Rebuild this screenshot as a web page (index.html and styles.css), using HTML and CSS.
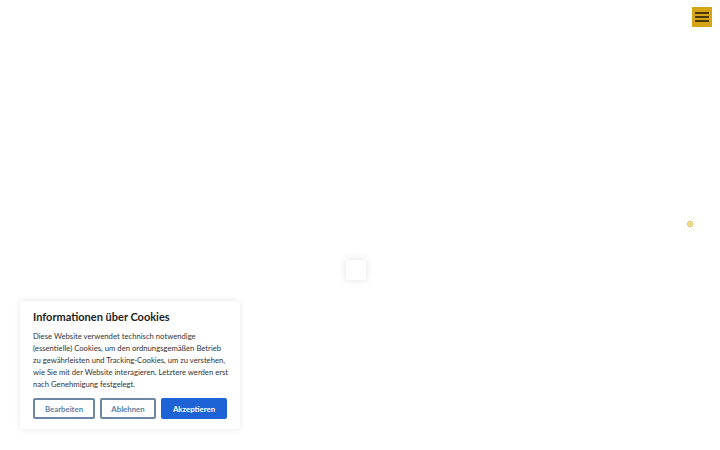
FILE: index.html
```html
<!DOCTYPE html>
<html lang="de">
<head>
<meta charset="UTF-8">
<meta name="viewport" content="width=device-width, initial-scale=1.0">
<title>Startseite</title>
<link rel="stylesheet" href="styles.css">
</head>
<body>
<div id="page">
    <button class="menu-toggle" aria-label="Menü">
        <span></span><span></span><span></span>
    </button>
    <div class="dot"></div>
    <div class="loader"></div>

    <div id="cookie-notice">
        <h3>Informationen über Cookies</h3>
        <p>Diese Website verwendet technisch notwendige (essentielle) Cookies, um den ordnungsgemäßen Betrieb zu gewährleisten und Tracking-Cookies, um zu verstehen, wie Sie mit der Website interagieren. Letztere werden erst nach Genehmigung festgelegt.</p>
        <div class="cookie-buttons">
            <button class="btn btn-outline">Bearbeiten</button>
            <button class="btn btn-outline">Ablehnen</button>
            <button class="btn btn-primary">Akzeptieren</button>
        </div>
    </div>
</div>
</body>
</html>
```

FILE: styles.css
```css
body {
    font-family: Lato, "Open Sans", sans-serif;
    background-color: #fff;
    margin: 0;
}
#page {
    position: relative;
    width: 720px;
    height: 450px;
    overflow: hidden;
}
.menu-toggle {
    position: absolute;
    top: 7px;
    left: 692px;
    width: 20px;
    height: 20px;
    padding: 5px 3px;
    border: none;
    background-color: #d5a516;
    display: flex;
    flex-direction: column;
    justify-content: space-between;
    cursor: pointer;
}
.menu-toggle span {
    display: block;
    height: 2px;
    background-color: #4a370c;
}
.dot {
    position: absolute;
    top: 221px;
    left: 687px;
    width: 4px;
    height: 4px;
    border: 1px solid #e2b526;
    border-radius: 50%;
    box-shadow: inset 0 0 0 1px #fff, inset 0 0 0 2px #e2b526;
}
.loader {
    position: absolute;
    top: 260px;
    left: 346px;
    width: 20px;
    height: 20px;
    background-color: #fff;
    box-shadow: 0 0 8px rgba(0, 0, 0, 0.12);
}
#cookie-notice {
    position: absolute;
    top: 301px;
    left: 20px;
    width: 220px;
    box-sizing: border-box;
    padding: 9px 10px 10px 13px;
    background-color: #fff;
    border-radius: 3px;
    box-shadow: 0 0 6px rgba(0, 0, 0, 0.1);
    color: #222;
}
#cookie-notice h3 {
    margin: 0 0 7px;
    font-size: 11px;
    font-weight: 700;
    color: #1d1d1d;
}
#cookie-notice p {
    margin: 0 0 8px;
    font-size: 7.7px;
    line-height: 12px;
    color: #333;
}
.cookie-buttons {
    display: flex;
    gap: 5px;
}
.btn {
    height: 21px;
    font-family: inherit;
    font-size: 7.8px;
    font-weight: 700;
    border-radius: 2px;
    cursor: pointer;
}
.btn-outline {
    padding: 0;
    border: 2px solid #6c87a6;
    background-color: #fff;
    color: #5b7ea5;
}
.btn-outline:first-child {
    width: 62px;
}
.btn-outline:nth-child(2) {
    width: 56px;
}
.btn-primary {
    width: 66px;
    border: none;
    background-color: #1d63d6;
    color: #fff;
}
```
